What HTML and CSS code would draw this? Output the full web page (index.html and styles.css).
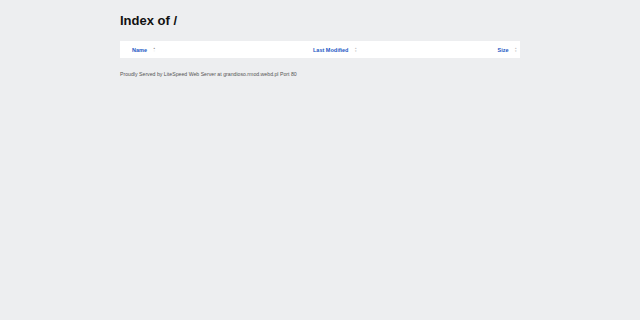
FILE: index.html
```html
<!DOCTYPE html>
<html lang="en">
<head>
    <meta charset="UTF-8">
    <title>Index of /</title>
    <link rel="stylesheet" href="styles.css">
</head>
<body>
    <div class="wrap">
        <h1>Index of /</h1>
        <table class="listing">
            <thead>
                <tr>
                    <th class="col-name"><a href="?C=N&amp;O=D">Name</a><span class="sort active">&#9650;<br><span class="off">&#9660;</span></span></th>
                    <th class="col-mod"><a href="?C=M&amp;O=A">Last Modified</a><span class="sort">&#9650;<br>&#9660;</span></th>
                    <th class="col-size"><a href="?C=S&amp;O=A">Size</a><span class="sort">&#9650;<br>&#9660;</span></th>
                </tr>
            </thead>
            <tbody></tbody>
        </table>
        <p class="footer">Proudly Served by LiteSpeed Web Server at grandioso.rmod.webd.pl Port 80</p>
    </div>
</body>
</html>
```

FILE: styles.css
```css
:root {
    --bg: #edeef0;
    --link: #2358c4;
    --text: #111;
    --muted: #555;
    --font: "Liberation Sans", Arial, sans-serif;
}
body, html {
    margin: 0;
    background-color: var(--bg);
    font-family: var(--font);
    color: var(--text);
}
.wrap {
    width: 400px;
    margin: 0 auto;
    padding-top: 13px;
}
h1 {
    margin: 0 0 12px 0;
    font-size: 13px;
    font-weight: bold;
    line-height: 16px;
}
.listing {
    width: 100%;
    border-collapse: collapse;
    background-color: #fff;
}
.listing th {
    height: 16px;
    padding: 1px 12px 0 12px;
    font-size: 5.5px;
    font-weight: bold;
    text-align: left;
    white-space: nowrap;
}
.listing th a,
.listing th a:visited {
    color: var(--link);
    text-decoration: none;
}
.col-name { width: 157px; }
.listing th.col-size {
    text-align: right;
    padding-right: 3px;
}
.sort {
    display: inline-block;
    vertical-align: middle;
    margin-left: 6px;
    font-size: 2.5px;
    line-height: 2.5px;
    color: #bbb;
}
.sort.active { color: #888; }
.sort .off { color: #eee; }
.footer {
    margin: 13px 0 0 0;
    font-size: 5.2px;
    color: var(--muted);
}
```
